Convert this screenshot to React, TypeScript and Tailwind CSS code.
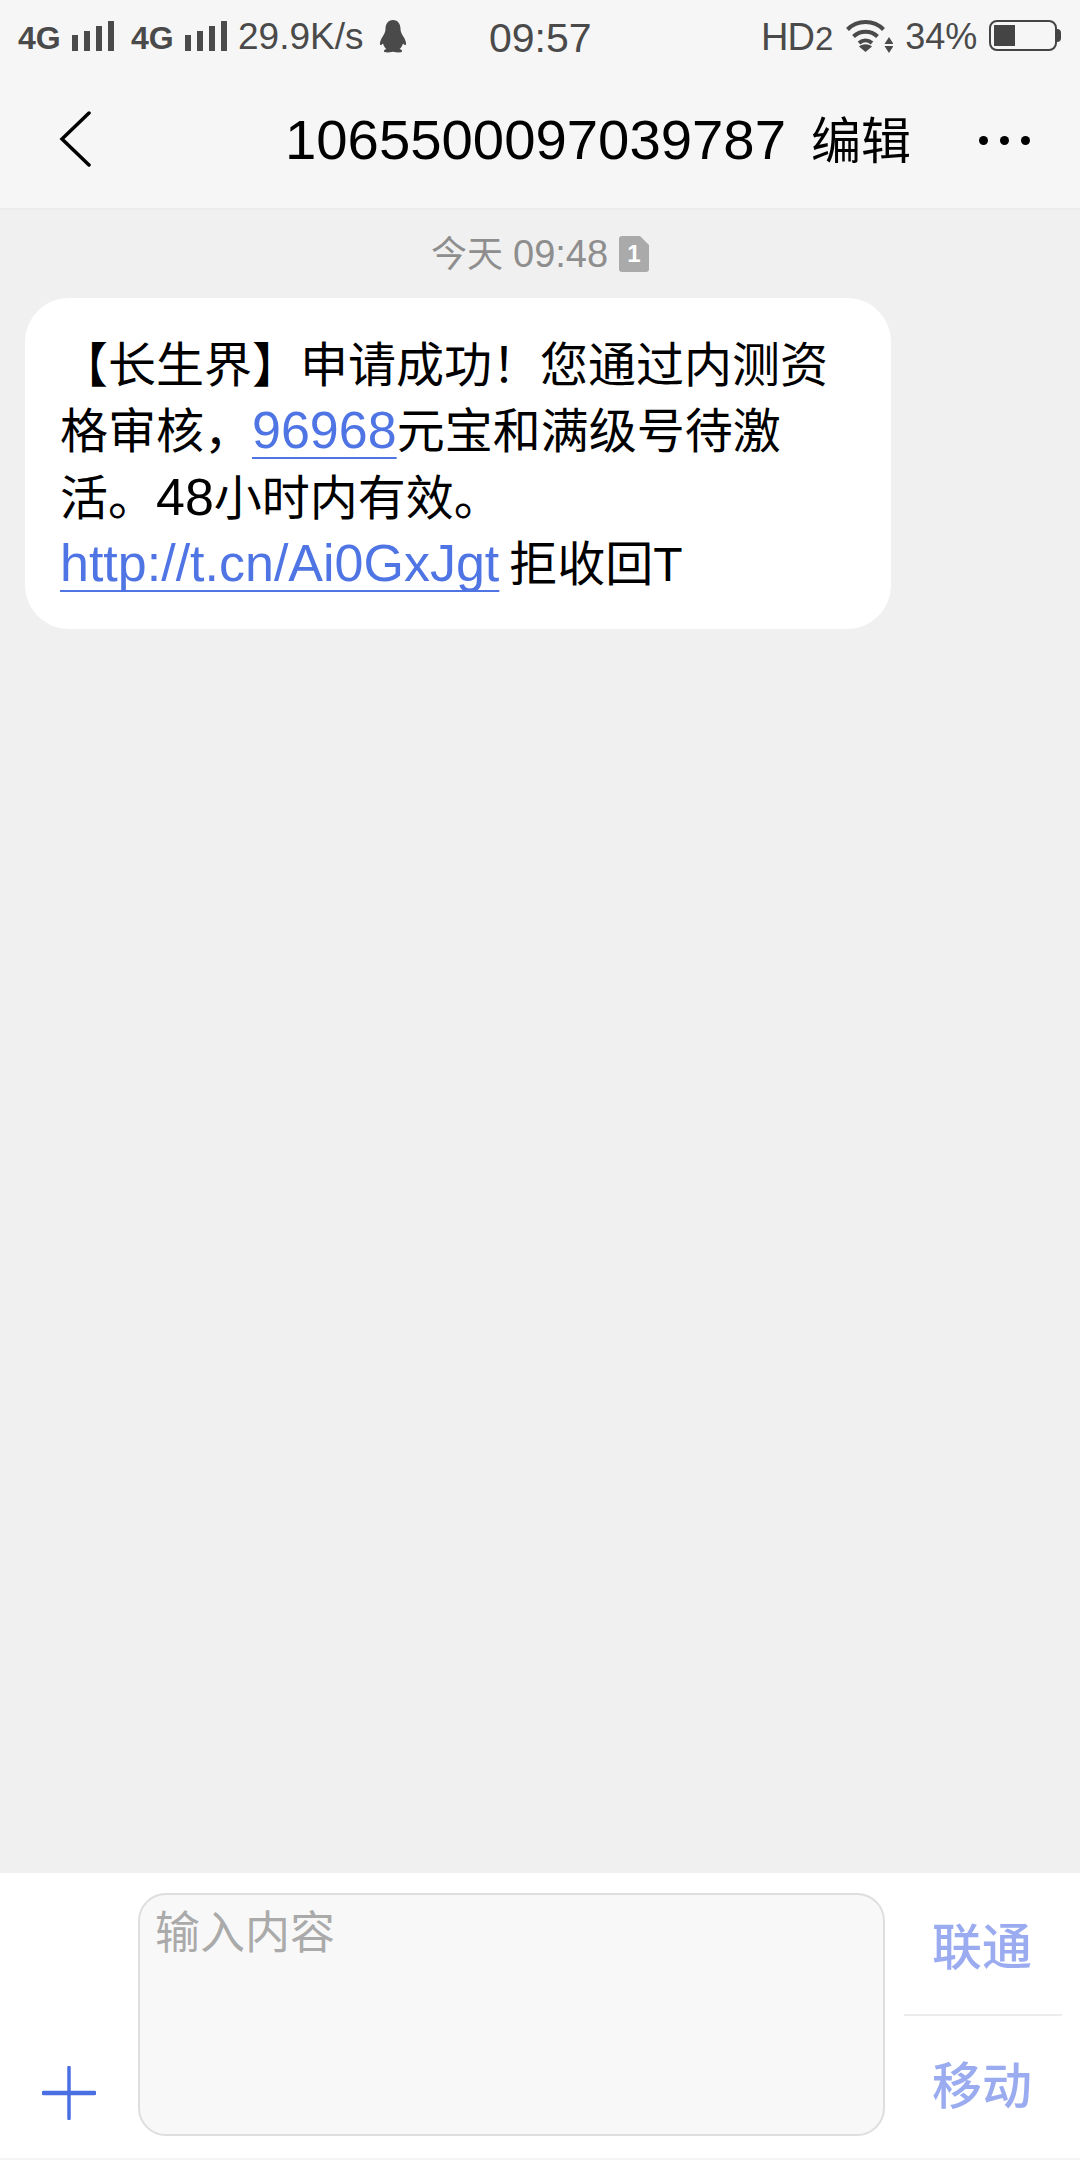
const cjk = '"Liberation Sans","Noto Sans CJK SC",sans-serif';

function Bars() {
  return (
    <div className="flex items-end gap-[6px] h-[30px] mt-[1px]">
      <div className="w-[6px] h-[16px] bg-[#4a4a4a]" />
      <div className="w-[6px] h-[20px] bg-[#4a4a4a]" />
      <div className="w-[6px] h-[25px] bg-[#4a4a4a]" />
      <div className="w-[6px] h-[30px] bg-[#4a4a4a]" />
    </div>
  );
}

function Penguin() {
  return (
    <svg width="28" height="33" viewBox="0 0 28 33" fill="#4a4a4a">
      <path d="M14 0C9 0 6.500 4 6.500 9c0 2.500-1 4.500-2.500 7C2 19 .5 22.500 1 24.500c.5 1.200 2 .2 3-1 .6 2.200 1.700 4 3.300 5.500-1.800.8-2.800 1.600-2.300 2.500.7 1.300 5 1 9 .2 4 .8 8.300 1.100 9-.2.5-.9-.5-1.700-2.300-2.500 1.600-1.500 2.700-3.300 3.300-5.500 1 1.200 2.500 2.200 3 1 .5-2-1-5.500-3-8.500-1.500-2.500-2.500-4.500-2.500-7C21.500 4 19 0 14 0z" />
    </svg>
  );
}

function Wifi() {
  return (
    <svg width="48" height="33" viewBox="0 0 48 33" fill="none" stroke="#4a4a4a" strokeWidth="4">
      <path d="M2.500 9.500C12 -0.500 29 -0.500 38.500 9.500" />
      <path d="M8.500 16.500C15 10 26 10 32.500 16.500" />
      <path d="M14 23C18 19.500 23 19.500 27 23" />
      <path d="M20.500 32L14 26.500C18 23.500 23 23.500 27 26.500z" fill="#4a4a4a" stroke="none" />
      <path d="M44 17l-4.500 7h9zM44 33l-4.500-7h9z" fill="#4a4a4a" stroke="none" />
    </svg>
  );
}

export default function App() {
  return (
    <div className="w-[1080px] h-[2160px] flex flex-col bg-[#f0f0f0] overflow-hidden" style={{ fontFamily: cjk }}>
      <header className="h-[210px] shrink-0 bg-[#f6f6f6] border-b-2 border-[#ececec] flex flex-col">
        <div className="h-[76px] flex items-start pt-[20px] pl-[18px] pr-[18px] text-[#4a4a4a]">
          <span className="text-[32px] leading-[33px] font-bold whitespace-nowrap w-[54px] pt-[2px]">4G</span>
          <Bars />
          <span className="text-[32px] leading-[33px] font-bold whitespace-nowrap w-[54px] pt-[2px] ml-[17px]">4G</span>
          <Bars />
          <span className="text-[37px] leading-[33px] ml-[11px] w-[141px]">29.9K/s</span>
          <Penguin />
          <span className="text-[41px] leading-[36px] ml-[82px] w-[274px]">09:57</span>
          <span className="text-[38px] leading-[34px] ml-[-2px] tracking-[-1px]">HD</span>
          <span className="text-[33px] leading-[34px] mt-[2px] ml-[1px]">2</span>
          <div className="ml-[12px]"><Wifi /></div>
          <span className="text-[36px] leading-[33px] ml-[12px]">34%</span>
          <div className="ml-[12px] w-[68px] h-[31px] border-2 border-[#444] rounded-[8px] p-[3px]">
            <div className="w-[21px] h-[21px] bg-[#444]" />
          </div>
          <div className="w-[4px] h-[13px] mt-[9px] bg-[#444] rounded-r-[4px]" />
        </div>
        <div className="flex-1 flex items-center relative">
          <svg className="ml-[59px] mt-[-6px] shrink-0" width="34" height="56" viewBox="0 0 34 56" fill="none" stroke="#000" strokeWidth="3.500" strokeLinecap="round">
            <path d="M30 2 L3 28 L30 54" />
          </svg>
          <span className="ml-[192px] mt-[-5px] text-[56.300px] leading-[64px] text-black whitespace-nowrap">1065500097039787</span>
          <span className="ml-[25px] mt-[0px] text-[50px] leading-[64px] text-black whitespace-nowrap">编辑</span>
          <div className="ml-[68px] mt-[-4px] flex gap-[12px]">
            <div className="w-[9px] h-[9px] rounded-full bg-black" />
            <div className="w-[9px] h-[9px] rounded-full bg-black" />
            <div className="w-[9px] h-[9px] rounded-full bg-black" />
          </div>
        </div>
      </header>

      <main className="flex-1 flex flex-col">
        <div className="mt-[25px] ml-[431px] h-[38px] flex items-center text-[#8e8e8e]">
          <span className="text-[36px] leading-[38px] w-[188px] whitespace-nowrap">今天<span className="text-[38px] leading-none ml-[10px]">09:48</span></span>
          <div className="w-[30px] h-[36px] rounded-[3px] bg-[#aaaaaa] flex items-center justify-center text-white text-[24px] font-bold leading-none [clip-path:polygon(0_0,70%_0,100%_25%,100%_100%,0_100%)]">
            1
          </div>
        </div>
        <div className="mt-[25px] ml-[25px] w-[866px] h-[331px] bg-white rounded-[44px] pl-[35px] pt-[35px] text-black text-[48px] leading-[66.300px] whitespace-nowrap">
          <div>【长生界】申请成功！您通过内测资</div>
          <div>格审核，<span className="text-[52px] leading-none text-[#4f74e3] underline decoration-[2px] underline-offset-[9px] [text-decoration-skip-ink:none]">96968</span>元宝和满级号待激</div>
          <div>活。<span className="text-[52px] leading-none">48</span>小时内有效。</div>
          <div><span className="text-[52px] leading-none text-[#4f74e3] underline decoration-[2px] underline-offset-[9px] [text-decoration-skip-ink:none]">http://t.cn/Ai0GxJgt</span><span className="ml-[10px]">拒收回T</span></div>
        </div>
      </main>

      <footer className="h-[287px] shrink-0 bg-white border-b-2 border-[#f4f4f4] flex items-start">
        <div className="w-[138px] h-full flex items-start justify-center shrink-0 pt-[193px]">
          <svg width="54" height="54" viewBox="0 0 54 54" fill="none" stroke="#4a6fe3" strokeLinecap="round">
            <path d="M27 1.500V52.500" strokeWidth="3.500" />
            <path d="M1.500 27H52.500" strokeWidth="4.500" />
          </svg>
        </div>
        <div className="mt-[20px] w-[747px] h-[243px] bg-[#f8f8f8] border-2 border-[#dedede] rounded-[28px] pl-[15px] pt-[11px] text-[45px] leading-[56px] text-[#aaaaaa] shrink-0">输入内容</div>
        <div className="ml-[19px] w-[158px] h-[285px] flex flex-col text-[#9aabf0] text-[50px] font-medium text-center">
          <div className="h-[143px] border-b-2 border-[#ececec] flex items-center justify-center pt-[10px] pr-[2px]">联通</div>
          <div className="flex-1 flex items-center justify-center pr-[2px]">移动</div>
        </div>
      </footer>
    </div>
  );
}
